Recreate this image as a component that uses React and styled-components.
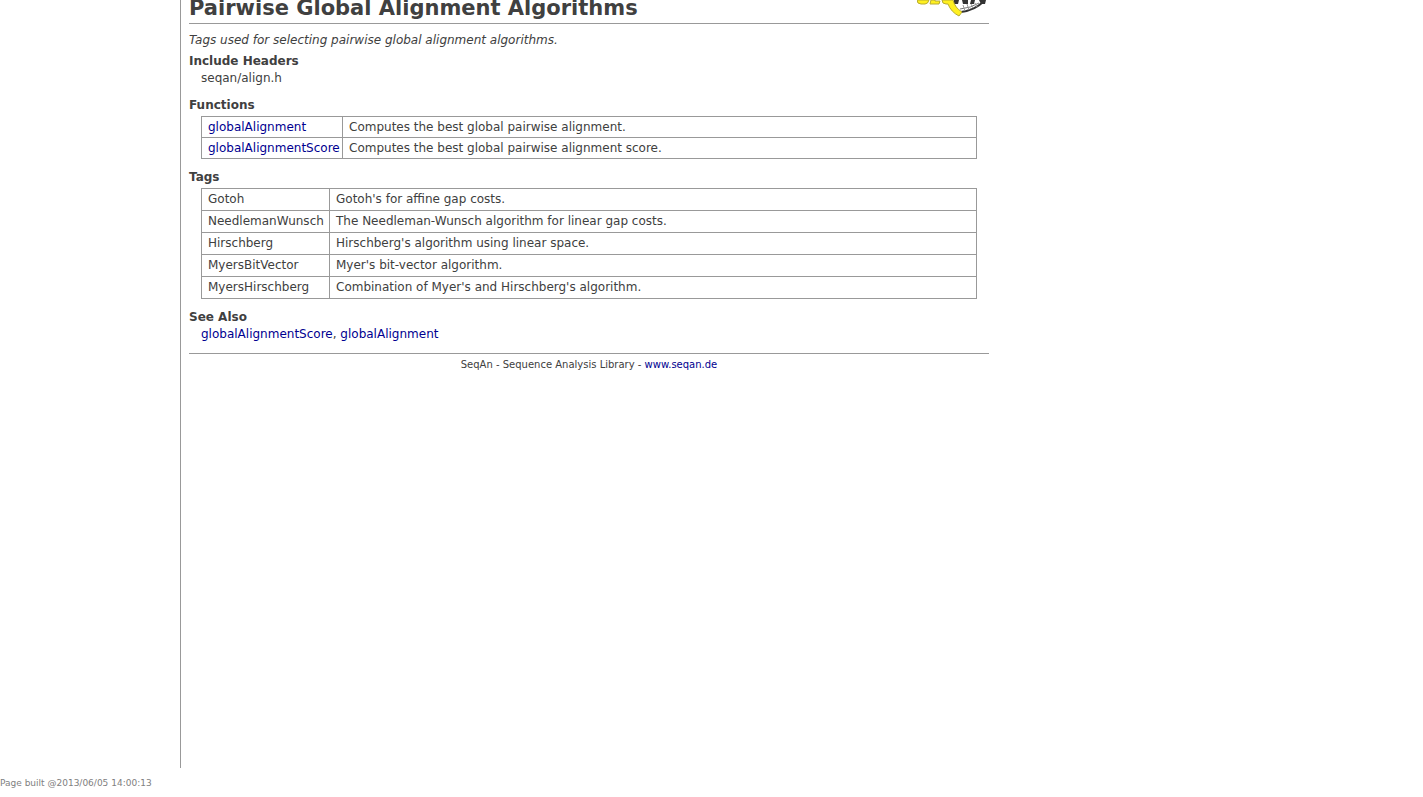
import React from "react";
import styled, { createGlobalStyle } from "styled-components";

const GlobalStyle = createGlobalStyle`
  body {
    margin: 0;
    background: #fff;
    color: #404040;
    font-family: Verdana, "DejaVu Sans", sans-serif;
    font-size: 12px;
    line-height: 16px;
  }
`;

const Page = styled.div`
  display: flex;
  flex-direction: column;
  min-height: 100vh;
`;

const Columns = styled.div`
  display: flex;
  flex: 1;
`;

const Sidebar = styled.nav`
  flex: 0 0 180px;
`;

const Content = styled.main`
  flex: 1;
  border-left: 1px solid #999;
  padding-left: 8px;
`;

const Article = styled.article`
  max-width: 800px;
`;

const Header = styled.header`
  display: flex;
  align-items: flex-end;
  justify-content: space-between;
  height: 23px;
  overflow: hidden;
  border-bottom: 1px solid #999;
`;

const Title = styled.h1`
  margin: 0;
  font-size: 21px;
  line-height: 30px;
  white-space: nowrap;
`;

const Logo = styled.svg`
  flex: none;
  align-self: flex-start;
  width: 72px;
  height: 20px;
`;

const Summary = styled.p`
  margin: 8px 0 5px;
  font-style: italic;
`;

const Section = styled.section`
  margin-bottom: ${(p) => p.$gap}px;
`;

const Heading = styled.h2`
  margin: 0;
  font-size: 12px;
  line-height: 16px;
`;

const Body = styled.div`
  padding: ${(p) => (p.$table ? "3px" : "1px")} 12px 0;
`;

const Table = styled.table`
  width: 100%;
  table-layout: fixed;
  border-collapse: collapse;
`;

const Cell = styled.td`
  height: ${(p) => p.$row}px;
  box-sizing: border-box;
  border: 1px solid #999;
  padding: 0 0 ${(p) => p.$row - 20}px 6px;
  line-height: 16px;
`;

const NameCell = styled(Cell)`
  width: ${(p) => p.$width}px;
  white-space: nowrap;
`;

const Link = styled.a`
  color: #000090;
  text-decoration: none;
`;

const Footer = styled.footer`
  border-top: 1px solid #999;
  padding-top: 3px;
  text-align: center;
  font-size: 10px;
`;

const BuildInfo = styled.div`
  padding: 7px 0 6px;
  color: #808080;
  font-size: 9px;
`;

const functions = [
  [<Link href="#globalAlignment">globalAlignment</Link>, "Computes the best global pairwise alignment."],
  [<Link href="#globalAlignmentScore">globalAlignmentScore</Link>, "Computes the best global pairwise alignment score."],
];

const tags = [
  ["Gotoh", "Gotoh's for affine gap costs."],
  ["NeedlemanWunsch", "The Needleman-Wunsch algorithm for linear gap costs."],
  ["Hirschberg", "Hirschberg's algorithm using linear space."],
  ["MyersBitVector", "Myer's bit-vector algorithm."],
  ["MyersHirschberg", "Combination of Myer's and Hirschberg's algorithm."],
];

function Entries({ rows, row, nameWidth }) {
  return (
    <Table>
      <tbody>
        {rows.map(([name, text]) => (
          <tr key={text}>
            <NameCell $row={row} $width={nameWidth}>{name}</NameCell>
            <Cell $row={row}>{text}</Cell>
          </tr>
        ))}
      </tbody>
    </Table>
  );
}

function SeqanLogo() {
  return (
    <Logo viewBox="0 0 72 20" role="img" aria-label="SeqAn">
      <path d="M66 2 Q58 10 44 12" fill="none" stroke="#333" strokeWidth="2" />
      <path d="M62 3 Q54 8 43 9" fill="none" stroke="#777" strokeWidth="1" />
      <path d="M46 5L48 11M50 4L52 10M54 4L56 8M58 3L60 7" stroke="#999" strokeWidth="1" />
      <path d="M37 0H42L41 4H36ZM45 0H51V4H46ZM54 0H58L57 4H53ZM62 0H69L68 4H64Z" fill="#333" />
      <g fill="#fff020" stroke="#b8ac30" strokeWidth="1">
        <path d="M0 0Q0 4 4 4H8Q11 4 12 0Z" />
        <path d="M14 0L13 4H22L23 1H18V0Z" />
        <path d="M25 0Q25 4 29 4H31Q34 12 42 16L45 12Q38 8 36 0Z" />
      </g>
    </Logo>
  );
}

export default function App() {
  return (
    <Page>
      <GlobalStyle />
      <Columns>
        <Sidebar />
        <Content>
          <Article>
            <Header>
              <Title>Pairwise Global Alignment Algorithms</Title>
              <SeqanLogo />
            </Header>
            <Summary>Tags used for selecting pairwise global alignment algorithms.</Summary>
            <Section $gap={11}>
              <Heading>Include Headers</Heading>
              <Body>seqan/align.h</Body>
            </Section>
            <Section $gap={10}>
              <Heading>Functions</Heading>
              <Body $table><Entries rows={functions} row={21} nameWidth={141} /></Body>
            </Section>
            <Section $gap={10}>
              <Heading>Tags</Heading>
              <Body $table><Entries rows={tags} row={22} nameWidth={128} /></Body>
            </Section>
            <Section $gap={11}>
              <Heading>See Also</Heading>
              <Body>
                <Link href="#globalAlignmentScore">globalAlignmentScore</Link>,{" "}
                <Link href="#globalAlignment">globalAlignment</Link>
              </Body>
            </Section>
            <Footer>
              SeqAn - Sequence Analysis Library - <Link href="http://www.seqan.de">www.seqan.de</Link>
            </Footer>
          </Article>
        </Content>
      </Columns>
      <BuildInfo>Page built @2013/06/05 14:00:13</BuildInfo>
    </Page>
  );
}
